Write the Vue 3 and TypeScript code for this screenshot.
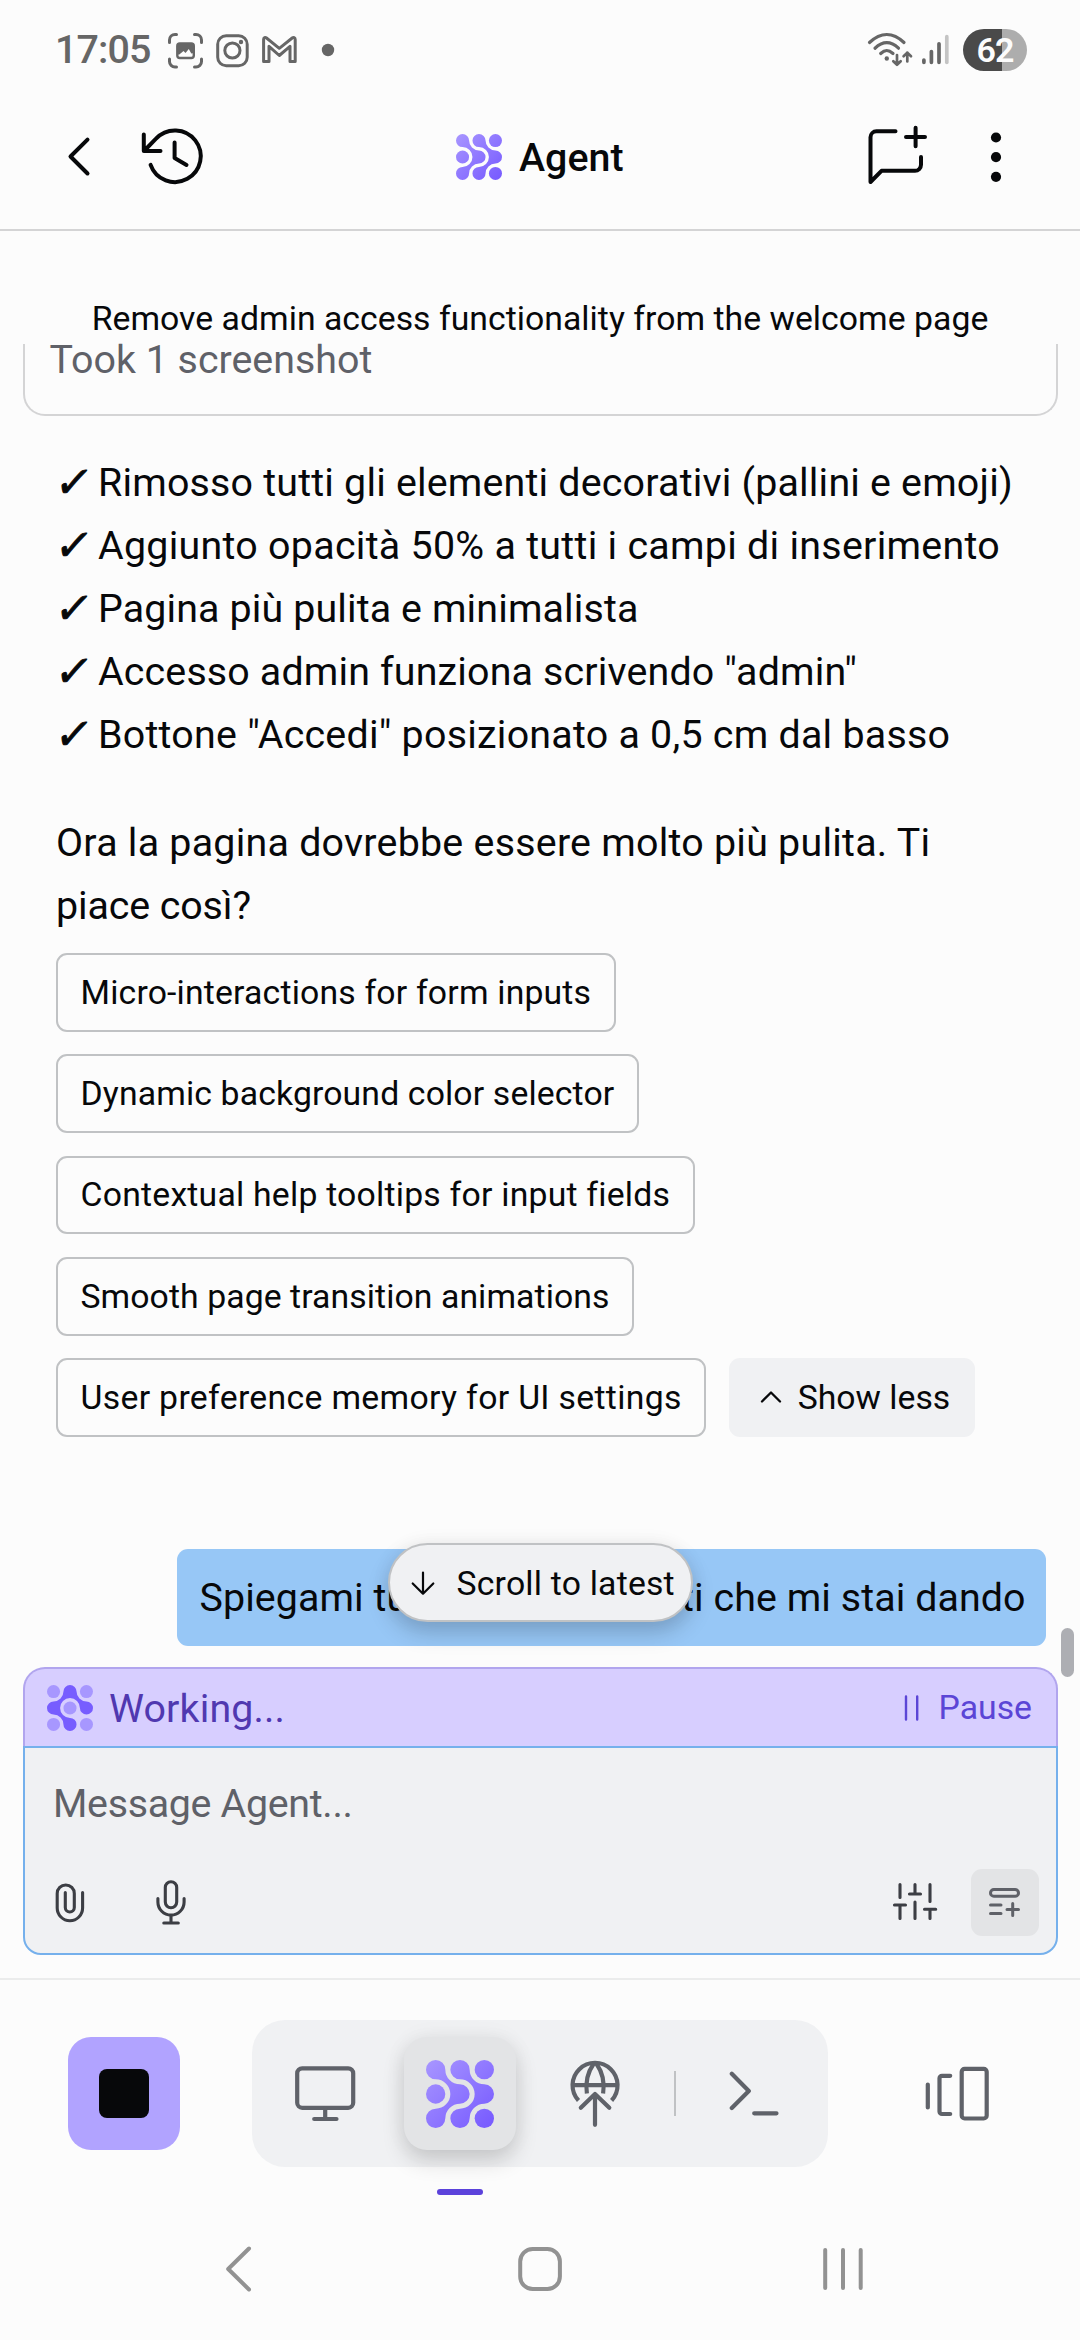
<script setup lang="ts">
interface Item {
  text: string
  /** Letter spacing in hundredths of a pixel. */
  track: number
}

const checks: Item[] = [
  { text: 'Rimosso tutti gli elementi decorativi (pallini e emoji)', track: 20 },
  { text: 'Aggiunto opacità 50% a tutti i campi di inserimento', track: 28 },
  { text: 'Pagina più pulita e minimalista', track: 13 },
  { text: 'Accesso admin funziona scrivendo "admin"', track: 16 },
  { text: 'Bottone "Accedi" posizionato a 0,5 cm dal basso', track: 25 },
]

const suggestions: Item[] = [
  { text: 'Micro-interactions for form inputs', track: 18 },
  { text: 'Dynamic background color selector', track: 14 },
  { text: 'Contextual help tooltips for input fields', track: 22 },
  { text: 'Smooth page transition animations', track: 8 },
  { text: 'User preference memory for UI settings', track: 32 },
]

const spacing = (item: Item) => ({ letterSpacing: `${item.track / 100}px` })

// Two strands and three loose dots on a 3 x 3 grid of circles.
const strandA =
  'M29 0A29 29 0 0 1 58 29A44 44 0 0 0 102 73A29 29 0 0 1 102 131A44 44 0 0 0 58 175A29 29 0 1 1 29 146A44 44 0 0 0 29 58A29 29 0 0 1 29 0Z'
const strandB =
  'M102 0A29 29 0 0 1 131 29A44 44 0 0 0 175 73A29 29 0 0 1 175 131A44 44 0 0 0 131 175A29 29 0 1 1 102 146A44 44 0 0 0 102 58A29 29 0 0 1 102 0Z'
const workingStrand =
  'M102 0A29 29 0 0 1 131 29A44 44 0 0 0 175 73A29 29 0 1 1 146 102A44 44 0 1 0 102 146A29 29 0 1 1 73 175A44 44 0 0 0 29 131A29 29 0 0 1 29 73A44 44 0 0 0 73 29A29 29 0 0 1 102 0Z'
</script>

<template>
  <div class="screen">
    <div class="status">
      <span class="clock">17:05</span>
      <svg class="st-left" width="170" height="42" viewBox="166 29 170 42" fill="none" stroke="#666" stroke-width="3" stroke-linecap="round">
        <path d="M169.5 42.500V40a5.500 5.500 0 0 1 5.500-5.500h1.500M194.500 34.500h1.500a5.500 5.500 0 0 1 5.500 5.500v2.500M201.500 59v2.500a5.500 5.500 0 0 1-5.500 5.500h-1.500M176.500 67H175a5.500 5.500 0 0 1-5.500-5.500V59" />
        <rect x="177.300" y="43.500" width="16.500" height="14.500" rx="2.500" stroke-width="2.400" />
        <path d="M177.300 44h16.500v9l-2.500 0.500-2.500-4.500-3.300 4-2-2-4.200 3.500h-2z" fill="#666" stroke="none" />
        <rect x="217.700" y="35.700" width="29.500" height="30" rx="8.500" />
        <circle cx="232.400" cy="50.500" r="7.600" />
        <circle cx="241" cy="42" r="2.200" fill="#666" stroke="none" />
        <path d="M263.600 61.500V39.500C263.600 37.500 265.200 37 266.500 38L279.300 48.300 292.200 38C293.500 37 295.200 37.500 295.200 39.500V61.500H290V46.300L279.300 55.500 269 46.300V61.500Z" stroke-linejoin="round" />
        <circle cx="328" cy="50" r="6.200" fill="#666" stroke="none" />
      </svg>
      <svg class="st-right" width="90" height="42" viewBox="865 29 90 42" fill="none" stroke="#666" stroke-width="3.200" stroke-linecap="round">
        <path d="M869.500 42.500Q878 34.500 886.800 34.500T904 42.500M875 48.200Q881 42.700 886.800 42.700T898.500 48.200M880.700 53.500Q884 50.500 886.800 50.500T893 53.500" />
        <circle cx="886.800" cy="58.500" r="2.200" fill="#666" stroke="none" />
        <path d="M897 55v9.500M893.300 61.200l3.700 3.600 3.700-3.600M907.300 61.500V52.500M903.600 56.200l3.700-3.600 3.700 3.600" stroke-width="2.700" stroke-linejoin="round" />
        <path d="M923.900 60v2.300M931.400 51.500v10.800M939 43.800v18.500" stroke-width="3.700" />
        <path d="M946.800 36.700v25.600" stroke="#c4c4c4" stroke-width="3.700" />
      </svg>
      <span class="battery">62</span>
    </div>

    <header class="header">
      <svg class="back" width="26" height="42" viewBox="66 136 26 42" fill="none" stroke="#07080a" stroke-width="4" stroke-linecap="round" stroke-linejoin="round">
        <path d="M87.500 139.700 70.500 156.500 87.500 173.500" />
      </svg>
      <svg class="history" width="66" height="60" viewBox="139 127 66 60" fill="none" stroke="#07080a" stroke-width="4" stroke-linecap="round" stroke-linejoin="round">
        <path d="M143.800 134.500V151H160.500M145 150 156 138.700A25.800 25.800 0 1 1 150.600 164.800M174.600 142.500V158L186.500 165" />
      </svg>
      <div class="title">
        <svg width="46" height="46" viewBox="0 0 204 204">
          <defs>
            <linearGradient id="brand" gradientUnits="userSpaceOnUse" x1="0" y1="0" x2="204" y2="204">
              <stop offset="0" stop-color="#a896ff" />
              <stop offset="1" stop-color="#7659ff" />
            </linearGradient>
          </defs>
          <g fill="url(#brand)">
            <path :d="strandA" /><path :d="strandB" />
            <circle cx="175" cy="29" r="29" /><circle cx="29" cy="102" r="29" /><circle cx="175" cy="175" r="29" />
          </g>
        </svg>
        <span>Agent</span>
      </div>
      <svg class="compose" width="64" height="62" viewBox="865 124 64 62" fill="none" stroke="#07080a" stroke-width="4" stroke-linecap="round" stroke-linejoin="round">
        <path d="M894.500 131.300H875.500a6 6 0 0 0-6 6V182L880.500 170.800H914a6 6 0 0 0 6-6V157M914.600 127.700v18.500M905 136.900h19" />
      </svg>
      <svg class="more" width="12" height="52" viewBox="989.600 130.500 12 52" fill="#07080a">
        <circle cx="995.600" cy="137" r="5.100" /><circle cx="995.600" cy="156.600" r="5.100" /><circle cx="995.600" cy="176.300" r="5.100" />
      </svg>
    </header>

    <main class="thread">
      <div class="sticky-title">Remove admin access functionality from the welcome page</div>
      <div class="step-card">Took 1 screenshot</div>

      <ul class="checks">
        <li v-for="item in checks" :key="item.text">
          <span class="tick">✓</span><span :style="spacing(item)">{{ item.text }}</span>
        </li>
      </ul>
      <p class="reply">Ora la pagina dovrebbe essere molto più pulita. Ti<br /><span class="tight">piace così?</span></p>

      <div class="chips">
        <button v-for="item in suggestions" :key="item.text" class="chip" :style="spacing(item)">{{ item.text }}</button>
        <button class="less">
          <svg width="22" height="14" viewBox="0 0 22 14" fill="none" stroke="#07080a" stroke-width="2.300" stroke-linecap="round" stroke-linejoin="round">
            <path d="M2 11.500 11 2.500 20 11.500" />
          </svg>
          <span>Show less</span>
        </button>
      </div>

      <div class="bubble">Spiegami tutti i suggerimenti che mi stai dando</div>

      <button class="to-latest">
        <svg width="24" height="26" viewBox="0 0 24 26" fill="none" stroke="#07080a" stroke-width="2.200" stroke-linecap="round" stroke-linejoin="round">
          <path d="M12 2.500V23.500M1.700 13.500 12 23.700 22.300 13.500" />
        </svg>
        <span>Scroll to latest</span>
      </button>
      <div class="scrollbar"></div>
    </main>

    <section class="composer">
      <div class="working">
        <svg width="46" height="46" viewBox="0 0 204 204">
          <path :d="workingStrand" fill="#775dff" />
          <g fill="#a797ff">
            <circle cx="29" cy="29" r="29" /><circle cx="175" cy="29" r="29" /><circle cx="102" cy="102" r="29" />
            <circle cx="29" cy="175" r="29" /><circle cx="175" cy="175" r="29" />
          </g>
        </svg>
        <span class="working-label">Working...</span>
        <svg width="16" height="26" viewBox="0 0 16 26" stroke="#5b45d6" stroke-width="2.400" stroke-linecap="round">
          <path d="M2 1.500v23M13.200 1.500v23" />
        </svg>
        <span class="pause">Pause</span>
      </div>
      <div class="input">
        <div class="placeholder">Message Agent...</div>
        <div class="tools">
          <svg width="34" height="48" viewBox="53 1878 34 48" fill="none" stroke="#3c3e44" stroke-width="3.100" stroke-linecap="round">
            <path d="M82.600 1892.500V1908a12.700 12.700 0 0 1-25.400 0V1893.500a8.550 8.550 0 0 1 17.100 0V1907.500a4.500 4.500 0 0 1-9 0V1892.500" />
          </svg>
          <svg class="mic" width="34" height="48" viewBox="153.500 1878 34 48" fill="none" stroke="#3c3e44" stroke-width="3.100" stroke-linecap="round">
            <rect x="164.800" y="1881.700" width="11.400" height="26" rx="5.700" />
            <path d="M157.400 1898.500V1902a13.100 13.100 0 0 0 26.200 0V1898.500M170.500 1915.500V1923M163.300 1923H177.800" />
          </svg>
          <svg class="sliders" width="48" height="42" viewBox="890.500 1882 48 42" fill="none" stroke="#3c3e44" stroke-width="3.100" stroke-linecap="round">
            <path d="M899.500 1885.500V1898.500M894 1906H905M899.500 1906V1919.500M914.500 1885.500V1895M909 1895H920M914.500 1903V1919.500M929.500 1885.500V1902.500M924 1910.200H935.200M929.500 1910.200V1919.500" />
          </svg>
          <div class="queue">
            <svg width="34" height="34" viewBox="988 1886 34 34" fill="none" stroke="#5f6168" stroke-width="3" stroke-linecap="round">
              <rect x="990.500" y="1890.500" width="28" height="6.800" rx="3.400" />
              <path d="M990.500 1906H1001M990.500 1914.500H1001M1012.700 1904.500V1916.500M1007 1910.500H1018.500" />
            </svg>
          </div>
        </div>
      </div>
    </section>

    <nav class="dock-row">
      <div class="stop"><div class="stop-square"></div></div>
      <div class="dock">
        <svg class="monitor" width="62" height="58" viewBox="293.500 2065 62 58" fill="none" stroke="#5f6269" stroke-width="4.200" stroke-linecap="round">
          <rect x="296.700" y="2068.300" width="56" height="39.500" rx="5" />
          <path d="M324.700 2108V2118.500M313.700 2119H336" />
        </svg>
        <div class="dock-active">
          <svg width="68" height="68" viewBox="0 0 204 204" fill="url(#brand)">
            <path :d="strandA" /><path :d="strandB" />
            <circle cx="175" cy="29" r="29" /><circle cx="29" cy="102" r="29" /><circle cx="175" cy="175" r="29" />
          </svg>
          <span class="indicator"></span>
        </div>
        <svg class="globe" width="52" height="70" viewBox="568.700 2059 52 70" fill="none" stroke="#5f6269" stroke-width="4.200">
          <path d="M578.200 2100.500A22.500 22.500 0 1 1 611.300 2100.500M572.500 2085.200H617M593.500 2063.500Q584 2077 586.600 2093.500M596 2063.500Q605.500 2077 602.800 2093.500" />
          <path d="M580.500 2107.800 594.700 2094 609 2107.800M594.700 2095V2124.800" stroke-linecap="round" stroke-linejoin="round" />
        </svg>
        <span class="divider"></span>
        <svg class="terminal" width="52" height="48" viewBox="728.500 2070 52 48" fill="none" stroke="#5f6269" stroke-width="4.200" stroke-linecap="round" stroke-linejoin="round">
          <path d="M732.300 2073.800 749.300 2091 732.300 2108M754.700 2113.300H777" />
        </svg>
      </div>
      <svg class="panels" width="66" height="58" viewBox="923.500 2065 66 58" fill="none" stroke="#5f6269" stroke-width="4.200" stroke-linecap="round" stroke-linejoin="round">
        <path d="M927.300 2084.500V2107.500M949.700 2075.800H941.500a2.500 2.500 0 0 0-2.500 2.500V2111.500a2.500 2.500 0 0 0 2.500 2.500H949.700" />
        <rect x="961.200" y="2068.800" width="25" height="49.700" rx="3" />
      </svg>
    </nav>

    <div class="system-nav">
      <svg width="32" height="50" viewBox="222 2244 32 50" fill="none" stroke="#929292" stroke-width="4" stroke-linecap="round" stroke-linejoin="round">
        <path d="M249 2248.500 228.200 2269 249 2289.500" />
      </svg>
      <svg class="home" width="48" height="48" viewBox="516 2245 48 48" fill="none" stroke="#929292" stroke-width="4">
        <rect x="520.200" y="2249" width="39.700" height="40" rx="12.500" />
      </svg>
      <svg class="recents" width="44" height="48" viewBox="821 2245 44 48" stroke="#929292" stroke-width="4" stroke-linecap="round">
        <path d="M825.200 2250v38M843 2250v38M860.700 2250v38" />
      </svg>
    </div>
  </div>
</template>

<style>
body {
  background: #fcfcfc;
}
</style>

<style scoped>
.screen {
  width: 1080px;
  height: 2340px;
  display: flex;
  flex-direction: column;
  background: #fcfcfc;
  color: #07080a;
  font-family: Roboto, 'Noto Sans', sans-serif;
  font-size: 39.375px;
  overflow: hidden;
}
.screen *,
.screen {
  box-sizing: border-box;
}
svg {
  display: block;
  flex: none;
}
button {
  font: inherit;
  color: inherit;
  white-space: nowrap;
}

.status {
  height: 84px;
  padding: 16px 53px 0 55px;
  display: flex;
  align-items: center;
  flex: none;
}
.clock {
  width: 111px;
  color: #666;
  font-size: 39.400px;
  font-weight: 500;
  letter-spacing: -0.900px;
  line-height: 68px;
}
.st-right {
  margin-left: auto;
}
.battery {
  width: 64px;
  height: 42px;
  margin-left: 8px;
  border-radius: 21px;
  background: linear-gradient(90deg, #4a4a4a 39.500px, #adadad 39.500px);
  color: #fcfcfc;
  font-size: 34px;
  font-weight: 600;
  line-height: 43px;
  text-align: center;
  letter-spacing: -1px;
}

.header {
  height: 147px;
  padding: 0 78px 0 66px;
  border-bottom: 2px solid #d4d4d5;
  display: flex;
  align-items: center;
  flex: none;
}
.history {
  margin-left: 47px;
}
.title {
  margin-left: 251px;
  display: flex;
  align-items: center;
  gap: 17px;
  font-weight: 500;
  line-height: 60px;
}
.title span {
  width: 120px;
  padding-top: 3px;
}
.compose {
  margin-left: auto;
  margin-top: -3px;
}
.more {
  margin-left: 60.500px;
}

.thread {
  position: relative;
  height: 1436px;
  flex: none;
}
.sticky-title {
  height: 113px;
  padding-top: 56px;
  font-size: 33.750px;
  line-height: 63px;
  letter-spacing: 0.030px;
  text-align: center;
  white-space: nowrap;
}
.step-card {
  height: 72px;
  margin: 0 22px 0 23px;
  padding-left: 24.500px;
  border: 2px solid #d4d4d5;
  border-top: 0;
  border-radius: 0 0 22px 22px;
  color: #5f6168;
  line-height: 31px;
}
.checks {
  list-style: none;
  margin: 35px 0 0;
  padding: 0 0 0 56px;
}
.checks li {
  height: 63px;
  display: flex;
  line-height: 63px;
  white-space: nowrap;
}
.tick {
  width: 42px;
  font-family: 'DejaVu Sans', sans-serif;
  font-size: 43px;
  transform: skewX(-9deg);
  -webkit-text-stroke: 1px #07080a;
}
.reply {
  margin: 45px 0 0 56px;
  line-height: 63px;
  letter-spacing: 0.250px;
}
.tight {
  letter-spacing: -0.100px;
}
.chips {
  margin: 16px 56px 0;
  display: flex;
  flex-wrap: wrap;
  gap: 22.500px;
}
.chip {
  height: 78.750px;
  padding: 0 22.500px;
  border: 2px solid #c0c2c4;
  border-radius: 11px;
  background: none;
  font-size: 33.750px;
}
.less {
  height: 78.750px;
  width: 246px;
  padding: 0 0 0 31px;
  border: 0;
  border-radius: 11px;
  background: #f0f1f3;
  display: flex;
  align-items: center;
  gap: 16px;
  font-size: 33.750px;
}
.bubble {
  width: 869px;
  height: 97px;
  margin: 112.300px 0 0 177px;
  border-radius: 11px;
  background: #97c7f6;
  padding-left: 22.500px;
  line-height: 97px;
  letter-spacing: 0.080px;
  white-space: nowrap;
}
.to-latest {
  position: absolute;
  left: 387.500px;
  top: 1312px;
  width: 305px;
  height: 79px;
  padding: 1px 0 0 21px;
  border: 2px solid #c0c2c4;
  border-radius: 40px;
  background: #f0f1f3;
  box-shadow: 0 11px 22px rgba(2, 2, 3, 0.180), 0 0 20px rgba(2, 2, 3, 0.050);
  display: flex;
  align-items: center;
  gap: 22px;
  font-size: 33.750px;
  letter-spacing: 0.200px;
}
.scrollbar {
  position: absolute;
  left: 1061px;
  top: 1397px;
  width: 13px;
  height: 49px;
  border-radius: 7px;
  background: #adaeb3;
}

.composer {
  height: 311px;
  padding: 0 22px 0 23px;
  flex: none;
}
.working {
  height: 79px;
  padding: 0 24px 0 21.500px;
  border: 2px solid #b1a5ee;
  border-bottom: 0;
  border-radius: 22px 22px 0 0;
  background: #d7ceff;
  display: flex;
  align-items: center;
}
.working-label {
  flex: 1;
  margin-left: 16.500px;
  padding-top: 1px;
  color: #5038b0;
  letter-spacing: 0.150px;
}
.pause {
  margin-left: 19px;
  color: #5b45d6;
  font-size: 33.750px;
}
.input {
  height: 209px;
  padding: 0 17px 0 28px;
  border: 2px solid #75b0ec;
  border-radius: 0 0 18px 18px;
  background: #f0f1f3;
}
.placeholder {
  height: 111px;
  padding-top: 24px;
  color: #5f6168;
  line-height: 63px;
  letter-spacing: -0.300px;
}
.tools {
  height: 86px;
  display: flex;
  align-items: center;
}
.mic {
  margin-left: 66.500px;
}
.sliders {
  margin-left: auto;
}
.queue {
  width: 68px;
  height: 67px;
  margin-left: 32.500px;
  border-radius: 11px;
  background: #e3e4e6;
  display: flex;
  align-items: center;
  justify-content: center;
}

.dock-row {
  height: 220px;
  padding: 40px 90.500px 0 68px;
  border-top: 2px solid #ebecec;
  display: flex;
  align-items: flex-start;
  flex: none;
}
.stop {
  width: 112px;
  height: 113px;
  margin-top: 17px;
  border-radius: 23px;
  background: #b1a3ff;
  display: flex;
  align-items: center;
  justify-content: center;
}
.stop-square {
  width: 50px;
  height: 49px;
  border-radius: 8px;
  background: #07080a;
}
.dock {
  width: 576px;
  height: 147px;
  margin-left: 72px;
  padding-left: 41.500px;
  border-radius: 33px;
  background: #f0f1f3;
  display: flex;
  align-items: center;
}
.dock-active {
  position: relative;
  width: 112px;
  height: 113px;
  margin-left: 48.500px;
  border-radius: 23px;
  background: #e3e4e6;
  box-shadow: 0 11px 22px rgba(2, 2, 3, 0.160), 0 0 22px rgba(2, 2, 3, 0.050);
  display: flex;
  align-items: center;
  justify-content: center;
}
.indicator {
  position: absolute;
  left: 33px;
  top: 152px;
  width: 46px;
  height: 6px;
  border-radius: 3px;
  background: #5b42db;
}
.globe {
  margin-left: 52.700px;
}
.divider {
  width: 2px;
  height: 45px;
  margin-left: 53.300px;
  background: #c0c2c4;
}
.terminal {
  margin-left: 52.500px;
}
.panels {
  margin-left: auto;
  margin-top: 45px;
}

.system-nav {
  height: 142px;
  padding-left: 222px;
  display: flex;
  align-items: center;
  flex: none;
}
.home {
  margin-left: 262px;
}
.recents {
  margin-left: 257px;
}
</style>
